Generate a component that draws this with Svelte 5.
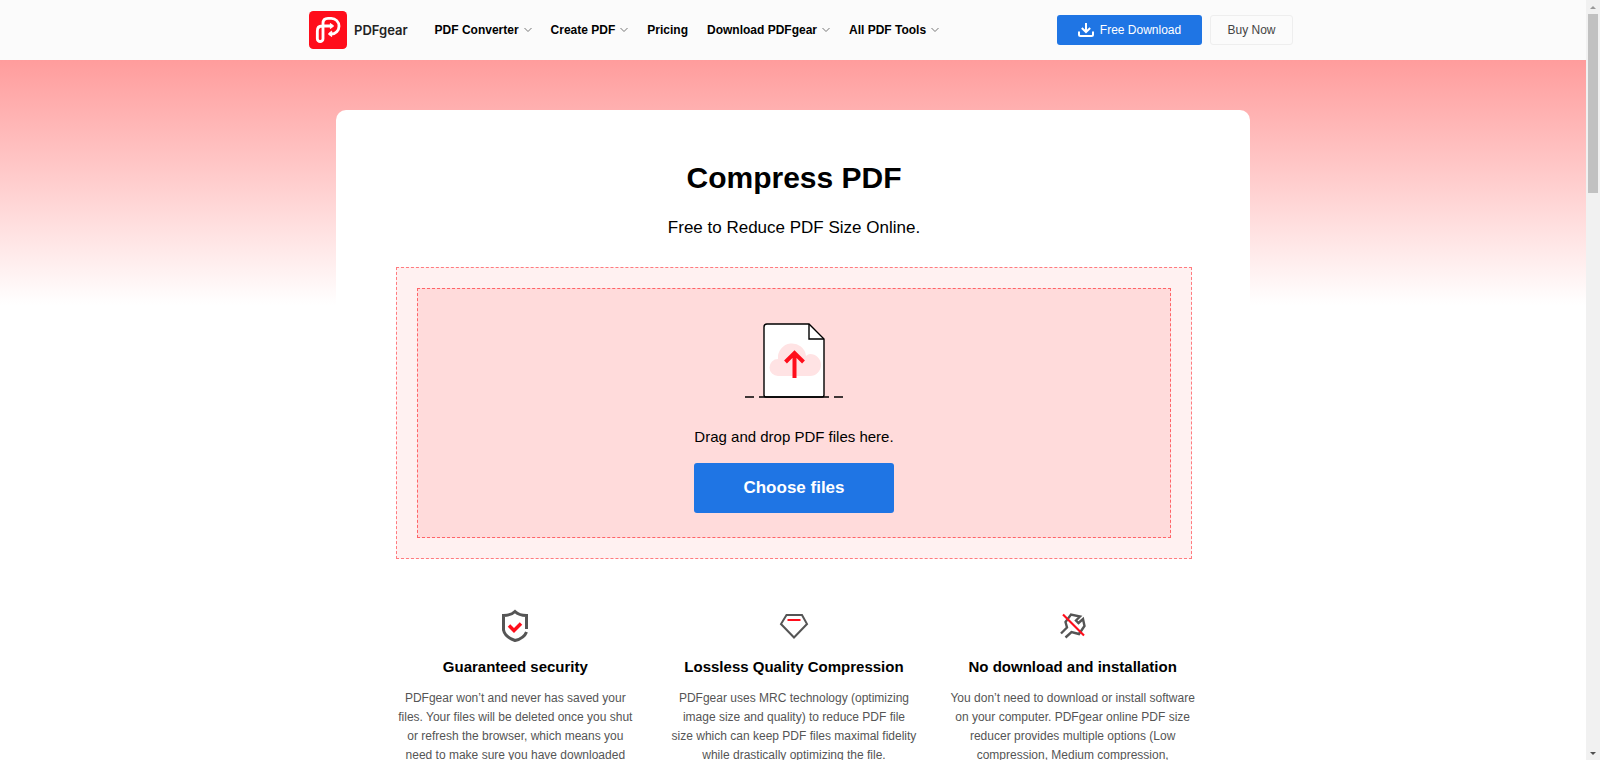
<script>
    const nav = [
        { label: "PDF Converter", menu: true },
        { label: "Create PDF", menu: true },
        { label: "Pricing", menu: false },
        { label: "Download PDFgear", menu: true },
        { label: "All PDF Tools", menu: true }
    ]

    const features = [
        {
            icon: "shield",
            title: "Guaranteed security",
            text: "PDFgear won’t and never has saved your files. Your files will be deleted once you shut or refresh the browser, which means you need\u00a0to make sure you have downloaded"
        },
        {
            icon: "diamond",
            title: "Lossless Quality Compression",
            text: "PDFgear uses MRC technology (optimizing image size and quality) to reduce PDF file size which can keep PDF files maximal fidelity while drastically optimizing the file."
        },
        {
            icon: "wrench",
            title: "No download and installation",
            text: "You don’t need to download or install software on your computer. PDFgear online PDF size reducer provides multiple options (Low compression, Medium compression,"
        }
    ]
</script>

<div class="window">
    <div class="page">
        <header>
            <div class="header-wrapper">
                <a class="brand" href="/">
                    <svg width="38" height="38" viewBox="0 0 114 114" fill="none" stroke="#fff" stroke-linecap="round" stroke-linejoin="round" aria-hidden="true">
                        <rect width="114" height="114" rx="13" fill="#ff0d1b" stroke="none" />
                        <path stroke-width="8.500" d="M64 69H67A23 23.500 0 0 0 67 22H57Q42 22 42 37V83A8.500 8.500 0 0 1 25 83V60Q25 45 39 45H67" />
                        <path fill="#fff" stroke-width="3" d="M65 38L74 45L65 52ZM67 61L58 69L67 76Z" />
                    </svg>
                    <span>PDFgear</span>
                </a>
                <nav>
                    {#each nav as item}
                        {#if item.menu}
                            <button class="nav-item">
                                {item.label}
                                <svg width="8" height="6" viewBox="0 0 8 6" fill="none" stroke="#777" aria-hidden="true">
                                    <path d="M.5 1L4 4.5L7.500 1" />
                                </svg>
                            </button>
                        {:else}
                            <a class="nav-item" href="/pricing">{item.label}</a>
                        {/if}
                    {/each}
                </nav>
                <div class="actions">
                    <a class="download" href="/download">
                        <svg width="16" height="14" viewBox="0 0 16 14" fill="none" stroke="#fff" stroke-width="2" aria-hidden="true">
                            <path d="M8 0V8.500M3.800 5L8 9L12.200 5M1 8.500V11.500Q1 13 2.500 13H13.500Q15 13 15 11.500V8.500" />
                        </svg>
                        Free Download
                    </a>
                    <a class="buy" href="/buy">Buy Now</a>
                </div>
            </div>
        </header>

        <main>
            <section class="card">
                <h1>Compress PDF</h1>
                <p class="subtitle">Free to Reduce PDF Size Online.</p>

                <div class="drop-outer">
                    <div class="drop-inner">
                        <svg width="100" height="76" viewBox="0 0 100 76" fill="none" aria-hidden="true">
                            <path d="M23 1H65L80 16V72Q80 74 78 74H22Q20 74 20 72V4Q20 1 23 1Z" fill="#fff" stroke="#000" stroke-width="1.400" />
                            <path d="M65 1V16H80" stroke="#000" stroke-width="1.400" />
                            <path d="M34 53A8.500 8.500 0 0 1 34 36A14 14 0 0 1 62 33Q64 31 66 31A11 11 0 0 1 66 53Z" fill="#ffe3e4" />
                            <path d="M50.500 55V31M41.500 39L50.500 30L59.500 39" stroke="#ff0d1b" stroke-width="4" />
                            <path d="M1 74H10M15 74H85M90 74H99" stroke="#000" stroke-width="1.400" />
                        </svg>
                        <p>Drag and drop PDF files here.</p>
                        <button class="choose">Choose files</button>
                    </div>
                </div>

                <div class="features">
                    {#each features as feature}
                        <article>
                            <svg width="34" height="34" viewBox="0 0 34 34" fill="none" stroke="#555" aria-hidden="true">
                                {#if feature.icon === "shield"}
                                    <path stroke-width="3" d="M28.500 20V6.500Q21 6.500 17 2.500Q13 6.500 5.500 6.500V21Q7 28 17 31.500Q26 29.500 28.500 23" />
                                    <path stroke="#ff0d1b" stroke-width="3.500" d="M11 16.500L16 21.500L23 14.500" />
                                {:else if feature.icon === "diamond"}
                                    <path stroke-width="2" d="M9.500 6H25L30 15L17 28.500L4 15Z" />
                                    <path stroke="#ff0d1b" stroke-width="2" d="M10.500 11H23.500" />
                                {:else}
                                    <path stroke-width="2.400" d="M5 24.500L11 18.500L9.500 13L15 5.500L24 7.500L20 11.500L22.500 14L27 10L28.500 17L23 25L15.500 23L9.500 28.500" />
                                    <path stroke="#ff0d1b" stroke-width="2.200" d="M7 5.500L28 26.500" />
                                {/if}
                            </svg>
                            <h2>{feature.title}</h2>
                            <p>{feature.text}</p>
                        </article>
                    {/each}
                </div>
            </section>
        </main>
    </div>

    <div class="scrollbar" aria-hidden="true">
        <svg width="14" height="14" viewBox="0 0 14 14"><path d="M4 9L7 6L10 9Z" fill="#999" /></svg>
        <div class="track">
            <div class="thumb"></div>
        </div>
        <svg width="14" height="14" viewBox="0 0 14 14"><path d="M4 6L7 9L10 6Z" fill="#505050" /></svg>
    </div>
</div>

<style>
    :global(body) {
        margin: 0;
        background: #fff;
        font-family: "Liberation Sans", Arial, sans-serif;
        color: #000;
    }

    h1, h2, p {
        margin: 0;
    }

    a {
        color: inherit;
        text-decoration: none;
    }

    button {
        padding: 0;
        border: none;
        background: none;
        color: inherit;
        font-family: inherit;
        cursor: pointer;
    }

    svg {
        flex-shrink: 0;
    }

    .window {
        display: flex;
        height: 100vh;
        overflow: hidden;
    }

    .page {
        flex: 1;
        min-width: 0;
        overflow: hidden;
    }

    header {
        display: flex;
        justify-content: center;
        background: #fbfbfb;
    }

    .header-wrapper {
        display: flex;
        align-items: center;
        box-sizing: border-box;
        width: 100%;
        max-width: 1000px;
        height: 60px;
        padding-left: 16px;
    }

    .brand {
        display: flex;
        align-items: center;
        gap: 7px;
        margin-right: 27px;
        font-family: Inter, "Liberation Sans", sans-serif;
        font-size: 13px;
        font-weight: 600;
        color: #222;
    }

    nav {
        display: flex;
        align-items: center;
        gap: 19px;
    }

    .nav-item {
        display: flex;
        align-items: center;
        gap: 5px;
        font-size: 12px;
        font-weight: 700;
        white-space: nowrap;
    }

    .actions {
        display: flex;
        gap: 8px;
        margin-left: auto;
        font-size: 12px;
    }

    .download,
    .buy {
        display: flex;
        align-items: center;
        justify-content: center;
        box-sizing: border-box;
        height: 30px;
        border-radius: 3px;
    }

    .download {
        gap: 6px;
        width: 145px;
        background: #1f75e4;
        color: #fff;
    }

    .buy {
        width: 83px;
        border: 1px solid #eee;
        color: #444;
    }

    main {
        padding-top: 50px;
        background: linear-gradient(#ff9c9c, #fff 245px);
    }

    .card {
        box-sizing: border-box;
        max-width: 914px;
        margin: 0 auto;
        padding: 50px 58px 0 60px;
        border-radius: 10px;
        background: #fff;
        text-align: center;
    }

    h1 {
        font-size: 30px;
        line-height: 36px;
    }

    .subtitle {
        margin-top: 20px;
        font-size: 17px;
        line-height: 24px;
    }

    .drop-outer {
        margin-top: 27px;
        padding: 20px;
        border: 1px dashed #ff7b7f;
        background: #fff1f1;
    }

    .drop-inner {
        display: flex;
        flex-direction: column;
        align-items: center;
        padding: 34px 0 24px;
        border: 1px dashed #ff6468;
        background: #ffdbdb;
    }

    .drop-inner p {
        margin-top: 28px;
        font-size: 15px;
        line-height: 20px;
    }

    .choose {
        width: 200px;
        height: 50px;
        margin-top: 16px;
        border-radius: 3px;
        background: #1f75e4;
        color: #fff;
        font-size: 17px;
        font-weight: 700;
    }

    .features {
        display: grid;
        grid-template-columns: repeat(3, 1fr);
        gap: 40px;
        margin-top: 50px;
    }

    article {
        display: flex;
        flex-direction: column;
        align-items: center;
    }

    h2 {
        margin-top: 14px;
        font-size: 15px;
        line-height: 20px;
        white-space: nowrap;
    }

    article p {
        margin: 12px -4px 0;
        font-size: 12px;
        line-height: 19px;
        color: #555;
    }

    .scrollbar {
        display: flex;
        flex-direction: column;
        width: 14px;
        background: #f1f1f1;
    }

    .track {
        flex: 1;
        padding: 0 2px;
    }

    .thumb {
        height: 24.500%;
        background: #c1c1c1;
    }
</style>
